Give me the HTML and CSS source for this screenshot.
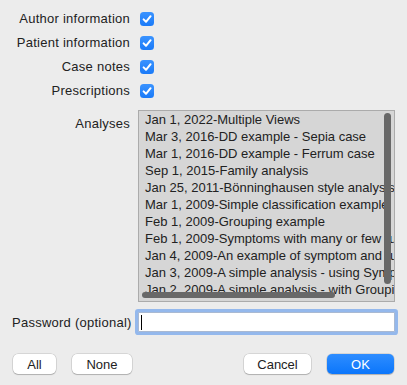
FILE: index.html
```html
<!DOCTYPE html>
<html lang="en">
<head>
    <meta charset="UTF-8">
    <title>Export case</title>
    <link rel="stylesheet" href="styles.css">
</head>
<body>
    <div class="dialog">
        <div class="form">
            <label class="label" for="author">Author information</label>
            <div class="field"><span class="check" id="author"><svg viewBox="0 0 14 14" width="14" height="14"><path d="M3.6 7.4 L6 9.8 L10.6 4.2" fill="none" stroke="#fff" stroke-width="2" stroke-linecap="round" stroke-linejoin="round"/></svg></span></div>

            <label class="label" for="patient">Patient information</label>
            <div class="field"><span class="check" id="patient"><svg viewBox="0 0 14 14" width="14" height="14"><path d="M3.6 7.4 L6 9.8 L10.6 4.2" fill="none" stroke="#fff" stroke-width="2" stroke-linecap="round" stroke-linejoin="round"/></svg></span></div>

            <label class="label" for="notes">Case notes</label>
            <div class="field"><span class="check" id="notes"><svg viewBox="0 0 14 14" width="14" height="14"><path d="M3.6 7.4 L6 9.8 L10.6 4.2" fill="none" stroke="#fff" stroke-width="2" stroke-linecap="round" stroke-linejoin="round"/></svg></span></div>

            <label class="label" for="prescriptions">Prescriptions</label>
            <div class="field"><span class="check" id="prescriptions"><svg viewBox="0 0 14 14" width="14" height="14"><path d="M3.6 7.4 L6 9.8 L10.6 4.2" fill="none" stroke="#fff" stroke-width="2" stroke-linecap="round" stroke-linejoin="round"/></svg></span></div>

            <label class="label label-top">Analyses</label>
            <div class="list">
                <ul class="items">
                    <li>Jan 1, 2022-Multiple Views</li>
                    <li>Mar 3, 2016-DD example - Sepia case</li>
                    <li>Mar 1, 2016-DD example - Ferrum case</li>
                    <li>Sep 1, 2015-Family analysis</li>
                    <li>Jan 25, 2011-Bönninghausen style analysis</li>
                    <li>Mar 1, 2009-Simple classification example</li>
                    <li>Feb 1, 2009-Grouping example</li>
                    <li>Feb 1, 2009-Symptoms with many or few rubrics</li>
                    <li>Jan 4, 2009-An example of symptom and rubric weights</li>
                    <li>Jan 3, 2009-A simple analysis - using Symptoms</li>
                    <li>Jan 2, 2009-A simple analysis - with Grouping</li>
                    <li>Jan 1, 2009-A simple analysis</li>
                </ul>
                <div class="vscroll"></div>
                <div class="hscroll"></div>
            </div>

            <label class="label label-pass" for="password">Password (optional)</label>
            <div class="field field-pass">
                <div class="input" id="password"><span class="caret"></span></div>
            </div>
        </div>

        <div class="buttons">
            <div class="group">
                <button class="btn btn-all">All</button>
                <button class="btn btn-none">None</button>
            </div>
            <div class="group">
                <button class="btn btn-wide">Cancel</button>
                <button class="btn btn-wide btn-default">OK</button>
            </div>
        </div>
    </div>
</body>
</html>
```

FILE: styles.css
```css
body {
    margin: 0;
    background: #ececec;
    font-family: "Liberation Sans", Arial, sans-serif;
    font-size: 13px;
    color: #222;
}
.dialog {
    width: 407px;
    height: 385px;
    box-sizing: border-box;
    padding: 7px 12px 0 12px;
}
.form {
    display: grid;
    grid-template-columns: 118px 1fr;
    column-gap: 8px;
}
.label {
    text-align: right;
    line-height: 24px;
    height: 24px;
    white-space: nowrap;
    letter-spacing: 0.25px;
}
.field {
    height: 24px;
    display: flex;
    align-items: center;
}
.check {
    width: 14px;
    height: 14px;
    margin-left: 2px;
    border-radius: 3.5px;
    background: linear-gradient(#3a93ff, #1a7af8);
    display: flex;
}
.label-top {
    margin-top: 7px;
    line-height: 28px;
}
.list {
    margin-top: 7px;
    height: 190px;
    background: #d6d6d6;
    border: 1px solid #ababab;
    position: relative;
    overflow: hidden;
}
.items {
    list-style: none;
    margin: 0;
    padding: 0 0 0 6px;
    white-space: nowrap;
}
.items li {
    line-height: 17px;
    height: 17px;
}
.vscroll {
    position: absolute;
    right: 3px;
    top: 2px;
    width: 7px;
    height: 171px;
    border-radius: 4px;
    background: #686868;
}
.hscroll {
    position: absolute;
    left: 3px;
    bottom: 3px;
    width: 193px;
    height: 6px;
    border-radius: 3px;
    background: #686868;
}
.label-pass {
    margin-top: 9px;
    line-height: 24px;
}
.field-pass {
    margin-top: 10px;
    height: 20px;
}
.input {
    width: 100%;
    height: 20px;
    box-sizing: border-box;
    background: #fff;
    border: 1px solid #a9b9d2;
    box-shadow: 0 0 0 3px #94b8ec;
    border-radius: 1px;
    display: flex;
    align-items: center;
    padding-left: 2px;
}
.caret {
    width: 1px;
    height: 15px;
    background: #000;
}
.buttons {
    display: flex;
    justify-content: space-between;
    margin-top: 19px;
    padding: 0 1px;
}
.group {
    display: flex;
    gap: 16px;
}
.btn {
    font-family: "Liberation Sans", Arial, sans-serif;
    font-size: 13px;
    height: 20px;
    padding: 0;
    border: none;
    border-radius: 5px;
    background: #fff;
    color: #222;
    box-shadow: 0 0 0 0.5px rgba(0, 0, 0, 0.18), 0 1px 1px rgba(0, 0, 0, 0.18);
}
.btn-all {
    width: 43px;
}
.btn-none {
    width: 60px;
}
.btn-wide {
    width: 67px;
}
.btn-default {
    background: linear-gradient(#2e8dff, #0b76fb);
    color: #fff;
}
```
